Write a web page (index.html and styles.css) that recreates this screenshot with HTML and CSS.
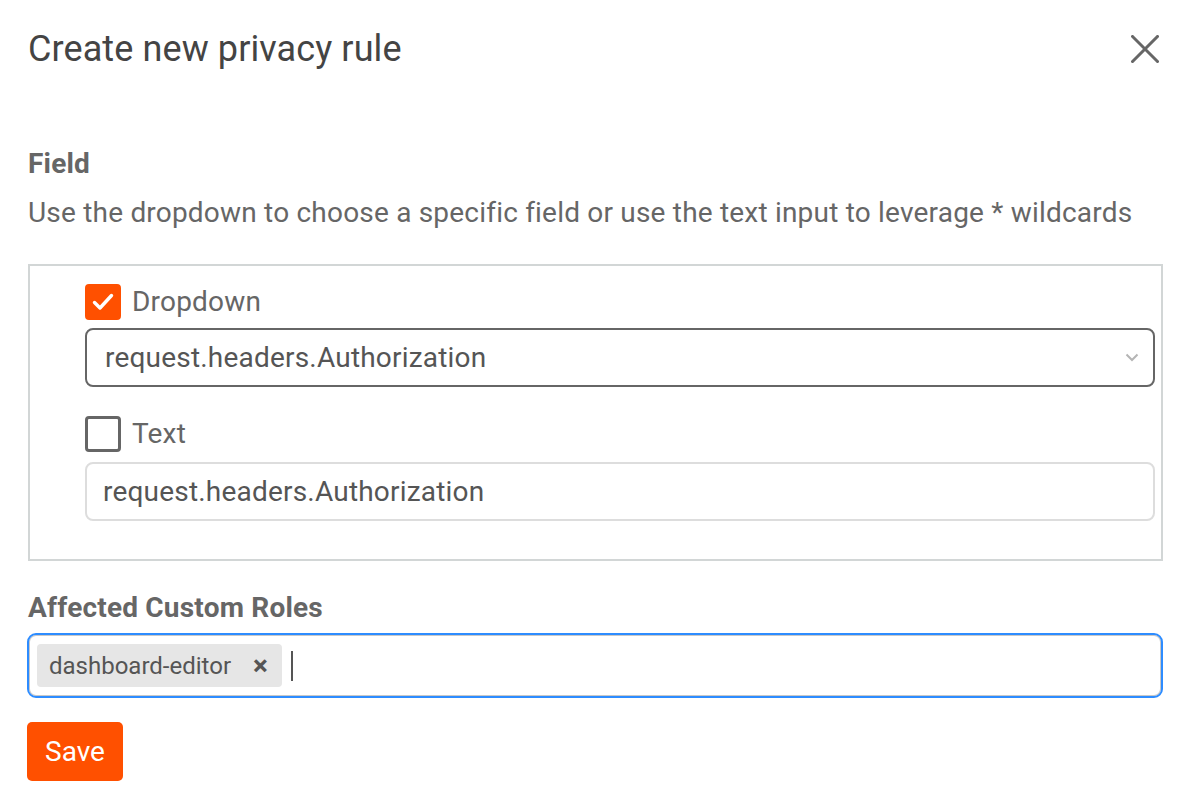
FILE: index.html
```html
<!DOCTYPE html>
<html>
<head>
<meta charset="utf-8">
<link rel="stylesheet" href="styles.css">
</head>
<body>
<div class="modal">
  <header class="modal-header">
    <h1 class="modal-title">Create new privacy rule</h1>
    <button class="close-btn" aria-label="Close">
      <svg width="28" height="28" viewBox="0 0 28 28"><path d="M1.5 1.5L26.5 26.5M26.5 1.5L1.5 26.5" stroke="#666" stroke-width="3" stroke-linecap="square"/></svg>
    </button>
  </header>

  <section class="field-section">
    <h2 class="label">Field</h2>
    <p class="help">Use the dropdown to choose a specific field or use the text input to leverage * wildcards</p>
    <div class="field-box">
      <label class="check-row">
        <span class="checkbox checked">
          <svg width="24" height="20" viewBox="0 0 24 20"><path d="M3.5 10.5L9 16L20.5 3.5" fill="none" stroke="#fff" stroke-width="3.4" stroke-linecap="round" stroke-linejoin="round"/></svg>
        </span>
        <span class="check-label">Dropdown</span>
      </label>
      <div class="select">
        <span class="select-value">request.headers.Authorization</span>
        <svg class="chevron" width="14" height="9" viewBox="0 0 14 9"><path d="M1.5 1.5L7 7L12.5 1.5" fill="none" stroke="#b5b5b5" stroke-width="2"/></svg>
      </div>
      <label class="check-row second">
        <span class="checkbox"></span>
        <span class="check-label">Text</span>
      </label>
      <div class="text-input">request.headers.Authorization</div>
    </div>
  </section>

  <section class="roles-section">
    <h2 class="label">Affected Custom Roles</h2>
    <div class="tag-input">
      <span class="tag">dashboard-editor<span class="tag-x">×</span></span>
      <span class="caret"></span>
    </div>
  </section>

  <button class="save-btn">Save</button>
</div>
</body>
</html>
```
FILE: styles.css
```css
* { box-sizing: border-box; }
html, body { margin: 0; padding: 0; background: #fff; }
body { font-family: Roboto, "Noto Sans", sans-serif; color: #555; letter-spacing: 0.2px; }

.modal { padding: 0 27px 0 28px; }

.modal-header {
  display: flex;
  justify-content: space-between;
  align-items: center;
  height: 98px;
}
.modal-title {
  margin: 0;
  font-size: 36px;
  line-height: 40px;
  font-weight: 400;
  color: #444;
  letter-spacing: 0.1px;
}
.close-btn {
  border: 0;
  background: none;
  padding: 0;
  margin-right: 4px;
  margin-top: -1px;
  display: flex;
}

.field-section { margin-top: 50px; }
.label {
  margin: 0;
  font-size: 28px;
  font-weight: 700;
  color: #666;
  line-height: 32px;
}
.help {
  margin: 17px 0 0;
  font-size: 28px;
  color: #666;
  line-height: 32px;
}
.field-box {
  margin-top: 35px;
  border: 2px solid #d2d6d6;
  padding: 18px 6px 38px 55px;
}
.check-row {
  display: flex;
  align-items: center;
  gap: 11px;
  height: 36px;
}
.check-row.second { margin-top: 29px; }
.checkbox {
  width: 36px;
  height: 36px;
  border-radius: 4px;
  border: 3px solid #666;
  display: flex;
  align-items: center;
  justify-content: center;
  flex: none;
}
.checkbox.checked {
  background: #ff5000;
  border-color: #ff5000;
}
.check-label {
  font-size: 28px;
  line-height: 36px;
  color: #666;
}
.select {
  margin-top: 8px;
  height: 59px;
  border: 2px solid #666;
  border-radius: 8px;
  display: flex;
  align-items: center;
  justify-content: space-between;
  padding: 0 14px 0 18px;
}
.select-value, .text-input {
  font-size: 28px;
  line-height: 32px;
  color: #555;
}
.text-input {
  margin-top: 10px;
  height: 59px;
  border: 2px solid #ddd;
  border-radius: 8px;
  display: flex;
  align-items: center;
  padding: 0 16px;
}

.roles-section { margin-top: 31px; }
.tag-input {
  margin-top: 9px;
  margin-left: -1px;
  height: 65px;
  border: 2px solid #2d8cff;
  border-radius: 9px;
  box-shadow: inset 0 0 0 1px #c8c8c8;
  display: flex;
  align-items: center;
  padding: 0 8px;
}
.tag {
  background: #e6e6e6;
  border-radius: 4px;
  height: 43px;
  display: flex;
  align-items: center;
  padding: 0 14px 0 12px;
  font-size: 24px;
  color: #555;
  letter-spacing: 0;
}
.tag-x {
  margin-left: 22px;
  font-size: 28px;
  font-weight: 700;
  color: #555;
}
.caret {
  width: 2px;
  height: 30px;
  background: #555;
  margin-left: 9px;
}

.save-btn {
  margin-top: 24px;
  margin-left: -1px;
  height: 59px;
  width: 96px;
  border: 0;
  border-radius: 5px;
  background: #ff5000;
  color: #fff;
  font-family: Roboto, sans-serif;
  font-size: 28px;
  display: flex;
  align-items: center;
  justify-content: center;
}
```
